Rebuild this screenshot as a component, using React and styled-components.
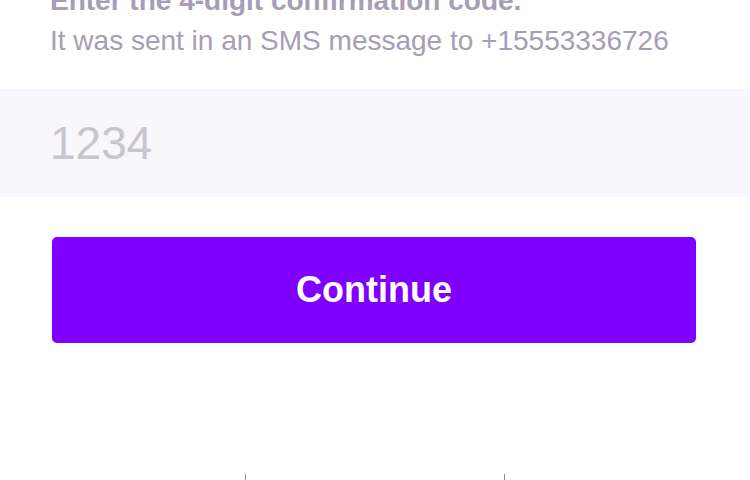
import React from "react";
import styled, { createGlobalStyle } from "styled-components";

const Global = createGlobalStyle`
  html, body { margin: 0; padding: 0; background: #ffffff; overflow: hidden; }
  body { font-family: "Liberation Sans", Arial, Helvetica, sans-serif; }
`;

const Screen = styled.div`
  width: 750px;
  height: 480px;
  overflow: hidden;
  display: flex;
  flex-direction: column;
  background: #ffffff;
`;

const Intro = styled.div`
  margin-top: -16px;
  padding: 0 50px;
  display: flex;
  flex-direction: column;
  gap: 6px;
`;

const Heading = styled.h1`
  margin: 0;
  font-size: 28px;
  line-height: 34px;
  font-weight: 700;
  color: #a69db6;
`;

const Sub = styled.p`
  margin: 0;
  font-size: 28px;
  line-height: 34px;
  font-weight: 400;
  color: #a69db6;
`;

const CodeField = styled.div`
  margin-top: 31px;
  height: 108px;
  background: #f9f7fe;
  display: flex;
  align-items: center;
  padding: 0 50px;
`;

const CodeInput = styled.input`
  border: none;
  outline: none;
  background: transparent;
  font-family: inherit;
  font-size: 46px;
  color: #2b2633;
  width: 100%;
  padding: 0;
  &::placeholder { color: #c8c5cf; }
`;

const Actions = styled.div`
  padding: 40px 54px 0 52px;
`;

const Primary = styled.button`
  width: 100%;
  height: 106px;
  border: none;
  border-radius: 5px;
  background: #7f00ff;
  color: #ffffff;
  font-family: inherit;
  font-size: 36px;
  font-weight: 700;
  cursor: pointer;
`;

const Keypad = styled.div`
  margin-top: auto;
  display: grid;
  grid-template-columns: 245px 259px 1fr;
  height: 6px;
`;

const Key = styled.div`
  border-left: ${(p) => (p.$divider ? "1px solid #8e8e93" : "none")};
`;

export default function App() {
  return (
    <>
      <Global />
      <Screen>
        <Intro>
          <Heading>Enter the 4-digit confirmation code.</Heading>
          <Sub>It was sent in an SMS message to +15553336726</Sub>
        </Intro>
        <CodeField>
          <CodeInput placeholder="1234" inputMode="numeric" />
        </CodeField>
        <Actions>
          <Primary>Continue</Primary>
        </Actions>
        <Keypad>
          <Key />
          <Key $divider />
          <Key $divider />
        </Keypad>
      </Screen>
    </>
  );
}
